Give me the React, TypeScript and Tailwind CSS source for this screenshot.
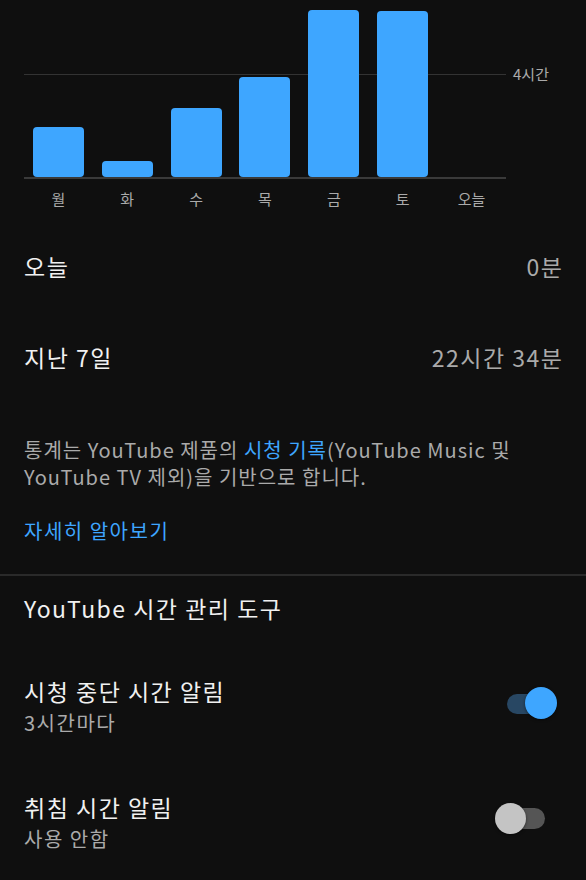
const days = [
  { label: "월", h: 50 },
  { label: "화", h: 16 },
  { label: "수", h: 69 },
  { label: "목", h: 100 },
  { label: "금", h: 167 },
  { label: "토", h: 166 },
  { label: "오늘", h: 0 },
];

function Toggle({ on }: { on: boolean }) {
  return (
    <div className="relative w-[62px] h-[32px] shrink-0 mt-[12px]">
      <div
        className={
          on
            ? "absolute left-[12px] top-[7px] w-[38px] h-[20px] rounded-full bg-[#284763]"
            : "absolute left-[15px] top-[5px] w-[35px] h-[21px] rounded-full bg-[#555555]"
        }
      />
      <div
        className={
          on
            ? "absolute left-[30px] top-0 w-[32px] h-[32px] rounded-full bg-[#3ea6ff] shadow-[0_1px_3px_rgba(0,0,0,0.5)]"
            : "absolute left-0 top-0 w-[31px] h-[31px] rounded-full bg-[#c4c4c4] shadow-[0_1px_3px_rgba(0,0,0,0.5)]"
        }
      />
    </div>
  );
}

function StatRow({ label, value }: { label: string; value: string }) {
  return (
    <div className="h-[91px] flex items-center justify-between px-6">
      <span className="text-[23px] tracking-[1.5px] text-[#f1f1f1]">{label}</span>
      <span className="text-[23px] tracking-[1.5px] text-[#aaaaaa] -mr-[1.5px]">
        {value}
      </span>
    </div>
  );
}

function SettingRow({
  title,
  sub,
  on,
}: {
  title: string;
  sub: string;
  on: boolean;
}) {
  return (
    <div className="flex items-start justify-between pl-6 pr-[29px]">
      <div>
        <div className="text-[23px] leading-[32px] tracking-[1.5px] text-[#f1f1f1]">
          {title}
        </div>
        <div className="text-[20px] leading-[32px] tracking-[1.5px] text-[#aaaaaa]">
          {sub}
        </div>
      </div>
      <Toggle on={on} />
    </div>
  );
}

export default function App() {
  return (
    <div
      className="w-[586px] h-[880px] overflow-hidden bg-[#0f0f0f]"
      style={{ fontFamily: '"Noto Sans CJK KR", "Noto Sans", sans-serif' }}
    >
      {/* chart */}
      <div className="pl-6">
        <div className="relative w-[482px]">
          <div className="absolute left-0 right-0 top-[74px] h-px bg-[#333333]" />
          <span className="absolute left-[489px] top-[63px] text-[15px] leading-[22px] text-[#aaaaaa] whitespace-nowrap">
            4시간
          </span>
          <div className="relative grid grid-cols-7 h-[177px] items-end">
            {days.map((d) => (
              <div key={d.label} className="flex justify-center">
                {d.h > 0 && (
                  <div
                    className="w-[51px] rounded-[4px] bg-[#3ea6ff]"
                    style={{ height: d.h }}
                  />
                )}
              </div>
            ))}
          </div>
          <div className="h-[2px] bg-[#3a3a3a]" />
          <div className="grid grid-cols-7 mt-[10px]">
            {days.map((d) => (
              <div
                key={d.label}
                className="text-center text-[15px] leading-[20px] text-[#aaaaaa]"
              >
                {d.label}
              </div>
            ))}
          </div>
        </div>
      </div>

      <div className="mt-[12px]">
        <StatRow label="오늘" value="0분" />
        <StatRow label="지난 7일" value="22시간 34분" />
      </div>

      <div className="px-6 mt-[33px] text-[20px] leading-[27px] text-[#aaaaaa] tracking-[1px] whitespace-nowrap">
        통계는 YouTube 제품의 <span className="text-[#3ea6ff]">시청 기록</span>
        (YouTube Music 및
        <br />
        YouTube TV 제외)을 기반으로 합니다.
      </div>

      <div className="px-6 mt-[27px] text-[20px] leading-[27px] tracking-[1.5px] text-[#3ea6ff]">
        자세히 알아보기
      </div>

      <div className="mt-[30px] h-[2px] bg-[#2a2a2a]" />

      <div className="px-6 mt-[16px] text-[23px] leading-[32px] tracking-[1.5px] text-[#f1f1f1]">
        YouTube 시간 관리 도구
      </div>

      <div className="mt-[51px]">
        <SettingRow title="시청 중단 시간 알림" sub="3시간마다" on />
      </div>
      <div className="mt-[52px]">
        <SettingRow title="취침 시간 알림" sub="사용 안함" on={false} />
      </div>
    </div>
  );
}
